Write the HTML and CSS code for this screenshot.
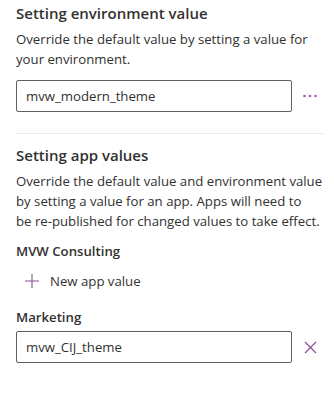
FILE: index.html
```html
<!DOCTYPE html>
<html>
<head>
<meta charset="utf-8">
<link rel="stylesheet" href="styles.css">
</head>
<body>
<div class="panel">
  <section class="section env">
    <h2 class="title">Setting environment value</h2>
    <p class="desc">Override the default value by setting a value for your environment.</p>
    <div class="field-row">
      <div class="input">mvw_modern_theme</div>
      <button class="icon-btn dots" aria-label="More">
        <svg width="14" height="4" viewBox="0 0 14 4"><circle cx="1.5" cy="2" r="1.3"/><circle cx="7" cy="2" r="1.3"/><circle cx="12.5" cy="2" r="1.3"/></svg>
      </button>
    </div>
  </section>
  <hr class="divider">
  <section class="section apps">
    <h2 class="title">Setting app values</h2>
    <p class="desc">Override the default value and environment value by setting a value for an app. Apps will need to<br>be re-published for changed values to take effect.</p>
    <div class="app first">
      <div class="app-name">MVW Consulting</div>
      <button class="add-btn">
        <svg width="16" height="16" viewBox="0 0 16 16"><path d="M8 1v14M1 8h14" stroke-width="1.1" fill="none"/></svg>
        <span>New app value</span>
      </button>
    </div>
    <div class="app second">
      <div class="app-name">Marketing</div>
      <div class="field-row">
        <div class="input">mvw_CIJ_theme</div>
        <button class="icon-btn close" aria-label="Remove">
          <svg width="13" height="13" viewBox="0 0 13 13"><path d="M1 1l11 11M12 1L1 12" stroke-width="1.2" fill="none"/></svg>
        </button>
      </div>
    </div>
  </section>
</div>
</body>
</html>
```
FILE: styles.css
```css
* { box-sizing: border-box; }
html, body { margin: 0; padding: 0; background: #fff; }
body {
  font-family: "Open Sans", "Noto Sans", sans-serif;
  color: #323130;
  font-size: 13.2px;
}
.panel {
  width: 334px;
  padding: 2px 10px 0 16px;
}
.title {
  margin: 0;
  font-size: 15px;
  font-weight: 600;
  line-height: 22px;
}
.desc {
  margin: 5px 0 0;
  font-size: 13.2px;
  line-height: 20px;
}
.field-row {
  display: flex;
  align-items: center;
  margin-top: 11px;
}
.input {
  width: 276px;
  height: 32px;
  border: 1px solid #605e5c;
  border-radius: 2px;
  padding: 0 9px;
  display: flex;
  align-items: center;
  font-size: 13.2px;
}
.icon-btn {
  border: 0;
  background: none;
  padding: 0;
  margin-left: 9px;
  width: 18px;
  height: 32px;
  display: flex;
  align-items: center;
  justify-content: center;
}
.dots svg { fill: #9c5fa8; }
.close svg { stroke: #8e4d9c; }
.divider {
  border: 0;
  border-top: 1px solid #edebe9;
  margin: 21px 0 0;
}
.apps { padding-top: 10px; }
.app.first { margin-top: 10px; }
.app.second { margin-top: 16px; }
.app-name {
  font-weight: 600;
  font-size: 13.2px;
  line-height: 20px;
}
.add-btn {
  border: 0;
  background: none;
  padding: 0 0 0 8px;
  margin-top: 10px;
  display: flex;
  align-items: center;
  gap: 10px;
  font-family: inherit;
  font-size: 13.2px;
  color: #323130;
  height: 20px;
}
.add-btn svg { stroke: #8e4d9c; }
.app .field-row { margin-top: 4px; }
```
